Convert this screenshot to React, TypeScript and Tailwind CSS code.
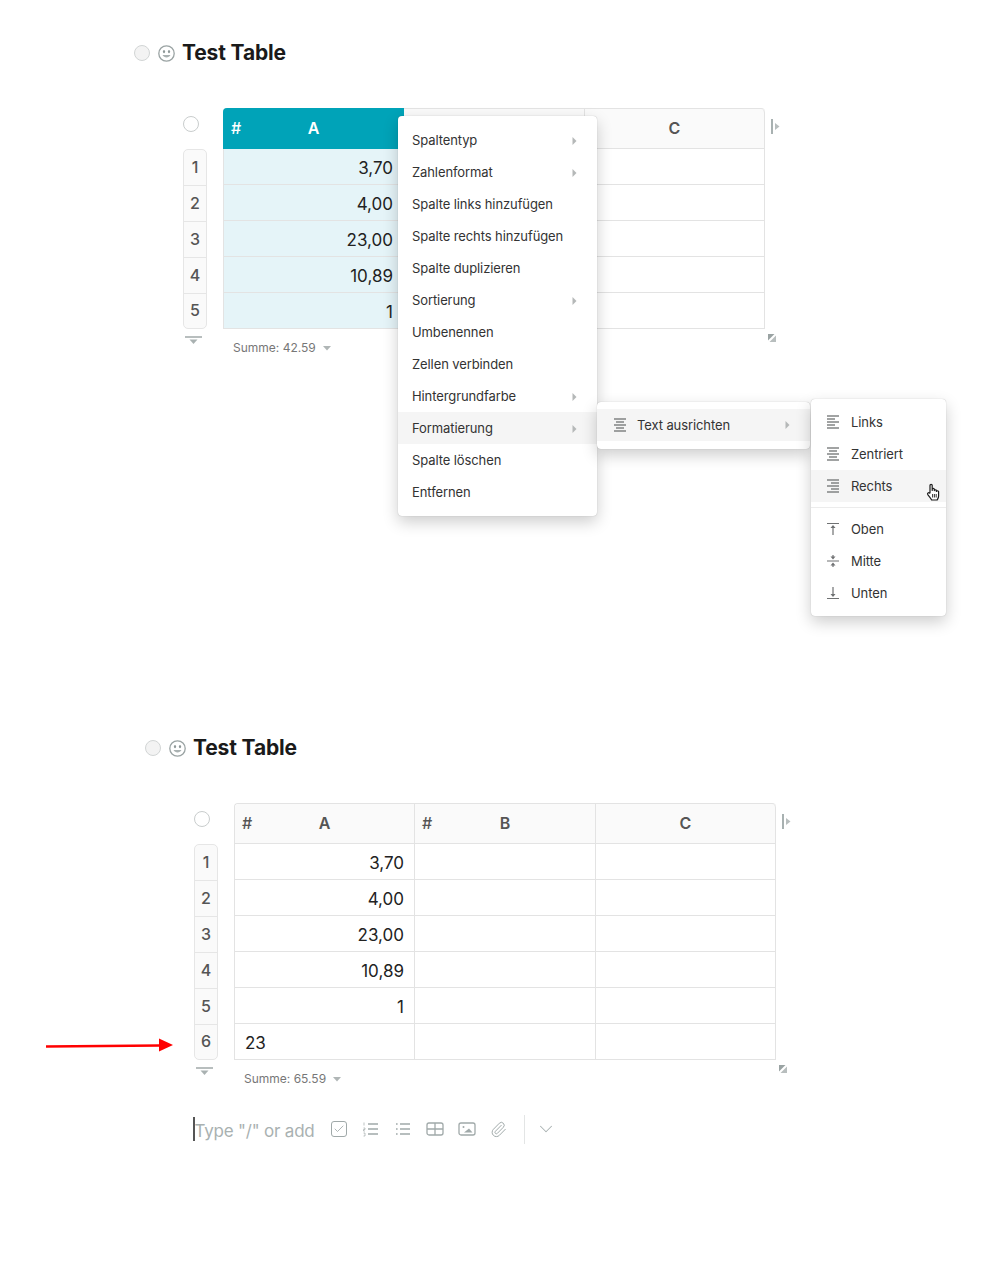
import React from 'react'
import { Check, ChevronDown, Paperclip } from 'lucide-react'

const font = "[font-family:Inter,'Liberation_Sans',sans-serif]"

const Tri = () => (
  <svg width="5" height="8" viewBox="0 0 5 8" className="ml-auto">
    <path d="M0.5 0 L4.5 4 L0.5 8 Z" fill="#b5b8b8" />
  </svg>
)

const Lines = ({ rows }: { rows: [number, number][] }) => (
  <svg width="14" height="14" viewBox="0 0 14 14" fill="none" stroke="#6f7172" strokeWidth="1.3">
    {rows.map(([a, b], i) => (
      <path key={i} d={`M${a} ${1 + i * 3}H${b}`} />
    ))}
  </svg>
)

const AlignLeft = () => <Lines rows={[[1, 13], [1, 9], [1, 13], [1, 9], [1, 13]]} />
const AlignCenter = () => <Lines rows={[[1, 13], [3, 11], [1, 13], [3, 11], [1, 13]]} />
const AlignRight = () => <Lines rows={[[1, 13], [5, 13], [1, 13], [5, 13], [1, 13]]} />

const VTop = () => (
  <svg width="14" height="14" viewBox="0 0 14 14" fill="none" stroke="#6f7172" strokeWidth="1.2">
    <path d="M1 1.5H13M7 4V13" />
    <path d="M4.5 6L7 3L9.5 6Z" fill="#6f7172" stroke="none" />
  </svg>
)
const VMid = () => (
  <svg width="14" height="14" viewBox="0 0 14 14" fill="none" stroke="#6f7172" strokeWidth="1.2">
    <path d="M1 7H13M7 1V3M7 11V13" />
    <path d="M4.5 2.5L7 5.5L9.5 2.5ZM4.5 11.5L7 8.5L9.5 11.5Z" fill="#6f7172" stroke="none" />
  </svg>
)
const VBottom = () => (
  <svg width="14" height="14" viewBox="0 0 14 14" fill="none" stroke="#6f7172" strokeWidth="1.2">
    <path d="M1 12.5H13M7 1V10" />
    <path d="M4.5 8L7 11L9.5 8Z" fill="#6f7172" stroke="none" />
  </svg>
)

const Smile = () => (
  <svg width="17" height="17" viewBox="0 0 17 17" fill="none" stroke="#9aa3a3" strokeWidth="1.3">
    <circle cx="8.5" cy="8.5" r="7.7" />
    <ellipse cx="6" cy="6.6" rx="1.1" ry="1.6" fill="#8e9898" stroke="none" />
    <ellipse cx="11" cy="6.6" rx="1.1" ry="1.6" fill="#8e9898" stroke="none" />
    <path d="M4.5 10C6 13.2 11 13.2 12.5 10Z" fill="#a9b1b1" stroke="none" />
  </svg>
)

const HandCursor = () => (
  <svg width="16" height="18" viewBox="0 0 16 18" fill="#fff" stroke="#1c1c1c" strokeWidth="1.2" strokeLinejoin="round">
    <path d="M4 10V2.6C4 1 6.2 1 6.2 2.6V7.5V6.2C6.2 5 8.3 5 8.3 6.2V7.6C8.3 6.5 10.4 6.5 10.4 7.6V8.5C10.4 7.5 12.6 7.5 12.6 8.6V13C12.6 15 11.6 16 11.2 17H5.6C5 15.5 3.5 14 1.8 11.6C1 10.4 2.6 9 3.6 10.2Z" />
    <path d="M6.6 11V14.5M8.4 11V14.5M10.2 11V14.5" fill="none" strokeWidth="0.9" />
  </svg>
)

const FilterMark = () => (
  <svg width="17" height="9" viewBox="0 0 17 9">
    <rect x="0" y="0" width="17" height="2" fill="#b8bebe" />
    <path d="M4.5 3.5H12.5L8.5 8Z" fill="#a9b1b1" />
  </svg>
)

const Handle = () => (
  <svg width="9" height="15" viewBox="0 0 9 15">
    <rect x="0" y="0" width="2" height="15" fill="#a8b1b1" />
    <path d="M4 4L8.5 7.5L4 11Z" fill="#b8bebe" />
  </svg>
)

const ResizeMark = () => (
  <svg width="8" height="8" viewBox="0 0 8 8">
    <path d="M0 0H6.5L0 6.5Z" fill="#9aa3a3" />
    <path d="M8 1.5V8H1.5Z" fill="#b8bebe" />
  </svg>
)

type Column = { label: string; numeric: boolean }
const columns: Column[] = [
  { label: 'A', numeric: true },
  { label: 'B', numeric: true },
  { label: 'C', numeric: false },
]

const TableBlock = ({ rows, sum, selected }: { rows: string[]; sum: string; selected?: boolean }) => (
  <div className="mt-[40px] flex items-start">
    <div className="w-[89px] pl-[49px] shrink-0">
      <div className="mt-[8px] w-[16px] h-[16px] rounded-full border border-[#c9cdcd] bg-white" />
      <div className="mt-[17px] w-[24px] rounded-[5px] border border-[#e6e6e6] bg-[#fafafa]">
        {rows.map((_, i) => (
          <div
            key={i}
            className="h-[36px] pb-[2px] flex items-center justify-center text-[16px] font-medium text-[#555] border-b border-[#e6e6e6] last:border-b-0 last:h-[34px]"
          >
            {i + 1}
          </div>
        ))}
      </div>
      <div className="mt-[7px] ml-[2px] w-[17px]">
        <FilterMark />
      </div>
    </div>
    <div>
      <div className="relative w-[542px]">
        <div className="grid grid-cols-[180px_181px_180px] border-t border-l border-[#e3e3e3] rounded-tl-[4px] rounded-tr-[4px]">
          {columns.map((c, ci) => {
            const active = selected && ci === 0
            return (
              <div
                key={c.label}
                className={`relative h-[40px] pb-[1px] flex items-center justify-center text-[16px] font-semibold border-b border-r ${
                  active ? 'bg-[#00a3b8] text-white border-[#00a3b8] ml-[-1px] mt-[-1px] h-[41px]' : 'bg-[#fafafa] text-[#555] border-[#e3e3e3]'
                } ${ci === 0 ? 'rounded-tl-[4px]' : ''} ${ci === 2 ? 'rounded-tr-[4px]' : ''}`}
              >
                <span className={active ? 'ml-[1px]' : ''}>{c.label}</span>
                {c.numeric && <span className={`absolute font-medium ${active ? 'left-[8px]' : 'left-[7px]'}`}>#</span>}
              </div>
            )
          })}
          {rows.map((v, ri) =>
            columns.map((c, ci) => {
              const active = selected && ci === 0
              const left = ci === 0 && v === '23'
              return (
                <div
                  key={`${ri}-${ci}`}
                  className={`h-[36px] pt-[4px] flex items-center px-[10px] text-[17px] text-[#222] border-b border-r border-[#e3e3e3] ${
                    active ? 'bg-[#e5f4f8]' : 'bg-white'
                  } ${left ? 'justify-start' : 'justify-end'}`}
                >
                  {ci === 0 ? v : ''}
                </div>
              )
            }),
          )}
        </div>
        <div className="absolute left-[548px] top-[11px]">
          <Handle />
        </div>
        <div className="absolute right-[-11px] bottom-[-13px] w-[8px] h-[8px] flex">
          <ResizeMark />
        </div>
      </div>
      <div className="mt-[9px] pl-[10px] h-[20px] flex items-center gap-[7px] text-[12px] text-[#777]">
        {sum}
        <svg width="8" height="5" viewBox="0 0 8 5">
          <path d="M0 0H8L4 4.5Z" fill="#b0b6b6" />
        </svg>
      </div>
    </div>
  </div>
)

const TitleRow = () => (
  <div className="pt-[36px] h-[68px] flex items-center">
    <div className="mt-[2px] w-[16px] h-[16px] rounded-full border border-[#d2d5d5] bg-[#f3f3f3]" />
    <div className="mt-[2px] ml-[8px]">
      <Smile />
    </div>
    <h1 className="mt-[2px] ml-[7px] text-[21px] leading-[32px] font-bold text-[#1a1a1a] tracking-[-0.15px]">Test Table</h1>
  </div>
)

const MenuItem = ({ label, arrow, active }: { label: string; arrow?: boolean; active?: boolean }) => (
  <div className={`h-[32px] pt-[2px] px-[14px] pr-[20px] flex items-center text-[13px] tracking-[-0.1px] text-[#333] ${active ? 'bg-[#f5f5f5]' : ''}`}>
    <span>{label}</span>
    {arrow && <Tri />}
  </div>
)

const IconItem = ({ icon, label, active }: { icon: React.ReactNode; label: string; active?: boolean }) => (
  <div className={`h-[32px] px-[15px] flex items-center gap-[11px] text-[13px] tracking-[-0.1px] text-[#333] ${active ? 'bg-[#f5f5f5]' : ''}`}>
    {icon}
    <span className="pt-[2px]">{label}</span>
  </div>
)

const shadow = 'shadow-[0_6px_16px_rgba(0,0,0,0.2),0_0_1px_rgba(0,0,0,0.3)]'

const ColumnMenus = () => (
  <>
    <div className={`absolute left-[264px] top-[116px] w-[199px] h-[400px] py-[8px] bg-white rounded-[4px] z-10 ${shadow}`}>
      <MenuItem label="Spaltentyp" arrow />
      <MenuItem label="Zahlenformat" arrow />
      <MenuItem label="Spalte links hinzufügen" />
      <MenuItem label="Spalte rechts hinzufügen" />
      <MenuItem label="Spalte duplizieren" />
      <MenuItem label="Sortierung" arrow />
      <MenuItem label="Umbenennen" />
      <MenuItem label="Zellen verbinden" />
      <MenuItem label="Hintergrundfarbe" arrow />
      <MenuItem label="Formatierung" arrow active />
      <MenuItem label="Spalte löschen" />
      <MenuItem label="Entfernen" />
    </div>
    <div className={`absolute left-[463px] top-[402px] w-[213px] h-[47px] py-[7px] bg-white rounded-[4px] z-20 ${shadow}`}>
      <div className="h-[32px] pl-[16px] pr-[20px] flex items-center gap-[10px] text-[13px] tracking-[-0.1px] text-[#333] bg-[#f5f5f5]">
        <AlignCenter />
        <span className="pt-[2px]">Text ausrichten</span>
        <Tri />
      </div>
    </div>
    <div className={`absolute left-[677px] top-[399px] w-[135px] h-[217px] pt-[7px] bg-white rounded-[4px] z-30 ${shadow}`}>
      <IconItem icon={<AlignLeft />} label="Links" />
      <IconItem icon={<AlignCenter />} label="Zentriert" />
      <IconItem icon={<AlignRight />} label="Rechts" active />
      <div className="mt-[5px] mb-[5px] border-t border-[#ececec]" />
      <IconItem icon={<VTop />} label="Oben" />
      <IconItem icon={<VMid />} label="Mitte" />
      <IconItem icon={<VBottom />} label="Unten" />
      <div className="absolute left-[115px] top-[84px]">
        <HandCursor />
      </div>
    </div>
  </>
)

const Composer = () => (
  <div className="mt-[25px] ml-[48px] h-[30px] flex items-center text-[#a9b1b1]">
    <div className="w-[1.5px] h-[24px] bg-[#555]" />
    <span className="pt-[5px] text-[17px] tracking-[-0.2px] whitespace-nowrap w-[135px]">Type "/" or add</span>
    <div className="flex items-center gap-[14px]">
      <div className="w-[18px] h-[18px] flex items-center justify-center">
        <div className="w-[16px] h-[16px] border-[1.3px] border-[#a0a9a9] rounded-[3px] flex items-center justify-center">
          <Check size={12} strokeWidth={1.7} className="text-[#a0a9a9]" />
        </div>
      </div>
      <svg width="18" height="18" viewBox="0 0 18 18" fill="none" stroke="#a0a9a9" strokeWidth="1.3">
        <path d="M6 4H16M6 9H16M6 14H16" />
        <path d="M2 2.5V5.5M1.5 8H3V9.5H1.5V11H3M1.5 13H3V16H1.5" strokeWidth="0.7" />
      </svg>
      <svg width="18" height="18" viewBox="0 0 18 18" fill="none" stroke="#a0a9a9" strokeWidth="1.3">
        <path d="M6 4H16M6 9H16M6 14H16" />
        <path d="M2 4H3.6M2 9H3.6M2 14H3.6" />
      </svg>
      <svg width="18" height="18" viewBox="0 0 18 18" fill="none" stroke="#a0a9a9" strokeWidth="1.3">
        <rect x="1" y="3" width="16" height="12" rx="2" />
        <path d="M1 9H17M9 3V15" />
      </svg>
      <svg width="18" height="18" viewBox="0 0 18 18" fill="none" stroke="#a0a9a9" strokeWidth="1.3">
        <rect x="1" y="3" width="16" height="12" rx="2" />
        <circle cx="5.5" cy="7" r="1" fill="#a0a9a9" stroke="none" />
        <path d="M6 12.5L11 8.5L14.5 12.5Z" fill="#a0a9a9" stroke="none" />
      </svg>
      <Paperclip size={17} strokeWidth={1.4} className="text-[#a0a9a9]" />
    </div>
    <div className="ml-[17px] w-px h-[29px] bg-[#e3e5e5]" />
    <ChevronDown size={22} strokeWidth={1.1} className="ml-[10px]" />
  </div>
)

export default function App() {
  return (
    <div className={`${font} relative w-[997px] h-[1285px] bg-white overflow-hidden`}>
      <section className="relative ml-[134px] h-[695px]">
        <TitleRow />
        <TableBlock rows={['3,70', '4,00', '23,00', '10,89', '1']} sum="Summe: 42.59" selected />
        <ColumnMenus />
      </section>
      <section className="relative ml-[145px]">
        <TitleRow />
        <TableBlock rows={['3,70', '4,00', '23,00', '10,89', '1', '23']} sum="Summe: 65.59" />
        <Composer />
        <svg width="128" height="14" viewBox="0 0 128 14" className="absolute left-[-99px] top-[343px]">
          <path d="M0 8.5L114 7.5" stroke="#ff0000" strokeWidth="2.6" />
          <path d="M113 0.5L127 7L113 13.5Z" fill="#ff0000" />
        </svg>
      </section>
    </div>
  )
}
